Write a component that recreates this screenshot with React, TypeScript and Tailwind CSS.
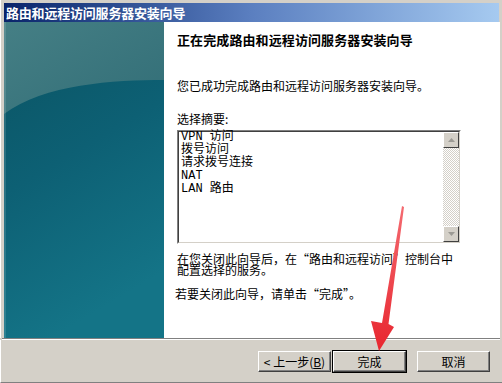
import React from "react";

const font = { fontFamily: '"Noto Sans CJK SC", "Liberation Sans", sans-serif' };

function SidePicture() {
  return (
    <svg width="160" height="316" viewBox="0 0 160 316" className="block">
      <defs>
        <linearGradient id="deep" x1="0" y1="0" x2="0.3" y2="1">
          <stop offset="0" stopColor="#0a5362" />
          <stop offset="0.5" stopColor="#0d6074" />
          <stop offset="1" stopColor="#147487" />
        </linearGradient>
        <linearGradient id="cap" x1="0" y1="0" x2="1" y2="1">
          <stop offset="0" stopColor="#457f85" />
          <stop offset="1" stopColor="#326e77" />
        </linearGradient>
      </defs>
      <rect width="160" height="316" fill="url(#deep)" />
      <path d="M0 0 H160 V58 C110 58 40 62 0 92 Z" fill="url(#cap)" />
      <rect x="0" y="0" width="2" height="316" fill="#ffffff" opacity="0.12" />
    </svg>
  );
}

function ScrollButton({ up }: { up?: boolean }) {
  return (
    <div className="w-[16px] h-[16px] bg-[#d4d0c8] border border-t-white border-l-white border-r-[#404040] border-b-[#404040] flex items-center justify-center">
      <svg width="7" height="4" viewBox="0 0 7 4">
        <path d={up ? "M3.5 0 L7 4 L0 4 Z" : "M0 0 L7 0 L3.5 4 Z"} fill="#9c9a94" />
      </svg>
    </div>
  );
}

function Button({ children, primary }: { children: React.ReactNode; primary?: boolean }) {
  return (
    <div className={primary ? "border border-black" : "border border-transparent"}>
      <div className="w-[73px] h-[21px] bg-[#d4d0c8] border border-t-white border-l-white border-r-[#404040] border-b-[#404040] flex items-center justify-center text-[12px] leading-none text-black shadow-[inset_-1px_-1px_0_#808080]">
        {children}
      </div>
    </div>
  );
}

export default function App() {
  return (
    <div className="relative w-[502px] h-[383px] bg-[#d4d0c8] overflow-hidden flex flex-col text-black" style={font}>
      <div className="pt-[3px] px-[3px] border-l border-white">
        <div className="h-[19px] bg-linear-to-r from-[#0a246a] via-[#5b7fc0] to-[#a6caf0] flex items-center pl-[2px]">
          <span className="text-white font-bold text-[13px] leading-none tracking-[-0.2px]">路由和远程访问服务器安装向导</span>
        </div>
      </div>

      <div className="flex h-[316px] pl-[3px] pr-[2px] border-l border-white">
        <SidePicture />
        <div className="flex-1 bg-white pl-[13px] pt-[10px] flex flex-col">
          <h1 className="font-bold text-[13px] leading-[16px] tracking-[0.1px]">正在完成路由和远程访问服务器安装向导</h1>
          <p className="mt-[32px] text-[12px] leading-[12px]">您已成功完成路由和远程访问服务器安装向导。</p>
          <p className="mt-[21px] text-[12px] leading-[12px]">选择摘要:</p>
          <div className="mt-[5px] w-[284px] h-[114px] border border-t-[#808080] border-l-[#808080] border-r-white border-b-white">
            <div className="h-full border border-t-[#404040] border-l-[#404040] border-r-[#d4d0c8] border-b-[#d4d0c8] bg-white flex">
              <div className="flex-1 pl-[2px] text-[12px] leading-[13px] -mt-[1px]" style={{ fontFamily: '"Liberation Mono", "Noto Sans CJK SC", monospace' }}>
                <div>VPN 访问</div>
                <div>拨号访问</div>
                <div>请求拨号连接</div>
                <div>NAT</div>
                <div>LAN 路由</div>
              </div>
              <div className="w-[16px] flex flex-col">
                <ScrollButton up />
                <div className="flex-1 bg-[repeating-conic-gradient(#d4d0c8_0%_25%,#ffffff_0%_50%)] bg-[length:2px_2px]" />
                <ScrollButton />
              </div>
            </div>
          </div>
          <p className="mt-[9px] text-[12px] leading-[11px] w-[278px]">
            在您关闭此向导后，在“路由和远程访问”控制台中配置选择的服务。
          </p>
          <p className="mt-[13px] -ml-[2px] text-[12px] leading-[12px]">若要关闭此向导，请单击“完成”。</p>
        </div>
      </div>

      <div className="border-t border-[#808080] border-b border-b-white mx-[2px]" />

      <div className="flex-1 flex justify-end items-start pt-[10px] pr-[11px] border-l border-white border-b border-b-[#808080]">
        <Button>
          <span>&lt; 上一步(<u>B</u>)</span>
        </Button>
        <Button primary>完成</Button>
        <div className="w-[9px]" />
        <Button>取消</Button>
      </div>

      <svg className="absolute left-0 top-0 pointer-events-none" width="502" height="383" viewBox="0 0 502 383">
        <defs>
          <linearGradient id="arrow" x1="0" y1="0" x2="0" y2="1">
            <stop offset="0" stopColor="#f46a70" />
            <stop offset="1" stopColor="#e8262f" />
          </linearGradient>
        </defs>
        <polygon
          points="402,206 404,207 388.5,324 394,327 379,351 371,321 382,323"
          fill="url(#arrow)"
        />
      </svg>
    </div>
  );
}
